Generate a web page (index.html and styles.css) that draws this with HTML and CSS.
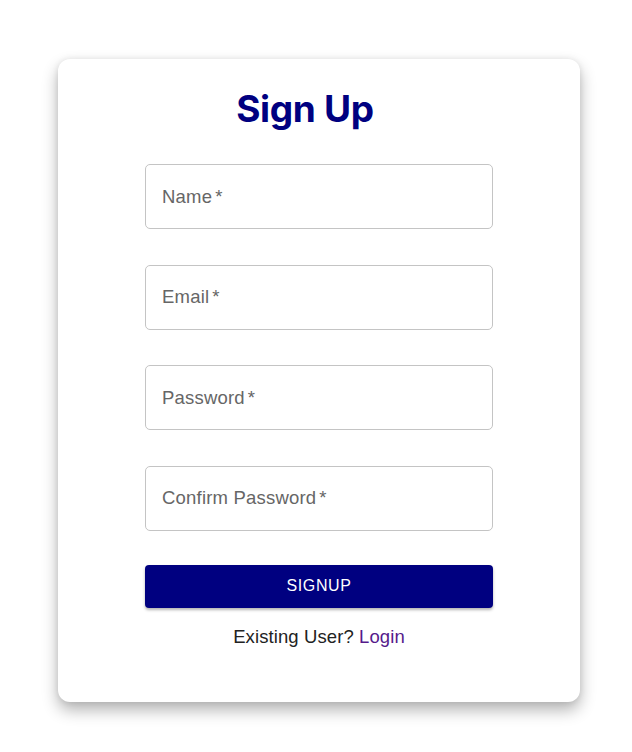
FILE: index.html
```html
<!DOCTYPE html>
<html>
<head>
<meta charset="utf-8">
<link rel="stylesheet" href="styles.css">
</head>
<body>
<div class="card">
  <h1 class="title">Sign Up</h1>
  <form class="form">
    <div class="field"><span class="label">Name<span class="star">*</span></span></div>
    <div class="field"><span class="label">Email<span class="star">*</span></span></div>
    <div class="field"><span class="label">Password<span class="star">*</span></span></div>
    <div class="field"><span class="label">Confirm Password<span class="star">*</span></span></div>
    <button type="button" class="btn">SIGNUP</button>
    <p class="foot">Existing User? <a class="link" href="#">Login</a></p>
  </form>
</div>
</body>
</html>
```
FILE: styles.css
```css
html, body { margin: 0; padding: 0; background: #fff; }
body { font-family: "Liberation Sans", Arial, sans-serif; padding-bottom: 50px; }
.card {
  box-sizing: border-box;
  margin: 59px 0 0 58px;
  width: 522px;
  height: 643px;
  background: #fff;
  border-radius: 12px;
  box-shadow: 0 8px 16px rgba(0,0,0,0.3), 0 0 6px rgba(0,0,0,0.08);
  display: flex;
  flex-direction: column;
  align-items: center;
  padding-top: 28px;
}
.title {
  margin: 0;
  padding-right: 28px;
  font-family: Inter, "Liberation Sans", sans-serif;
  font-weight: 700;
  font-size: 37px;
  line-height: 44px;
  color: #000080;
  letter-spacing: -0.3px;
}
.form {
  width: 348px;
  margin-top: 33px;
  display: flex;
  flex-direction: column;
}
.field {
  box-sizing: border-box;
  height: 65px;
  border: 1px solid #c4c4c4;
  border-radius: 5px;
  display: flex;
  align-items: center;
  padding-left: 16px;
  margin-bottom: 35.6px;
}
.label {
  font-size: 18.5px;
  letter-spacing: 0.2px;
  color: #666;
}
.star { margin-left: 3px; }
.btn {
  margin-top: -1.5px;
  height: 43px;
  border: none;
  border-radius: 4px;
  background: #000080;
  color: #fff;
  font-family: "Liberation Sans", Arial, sans-serif;
  font-size: 16px;
  letter-spacing: 0.6px;
  box-shadow: 0 2px 3px rgba(0,0,0,0.3);
  cursor: pointer;
}
.foot {
  margin: 18px 0 0;
  text-align: center;
  font-size: 18.5px;
  letter-spacing: 0.1px;
  color: #222;
}
.link { color: #551a8b; text-decoration: none; }
```
